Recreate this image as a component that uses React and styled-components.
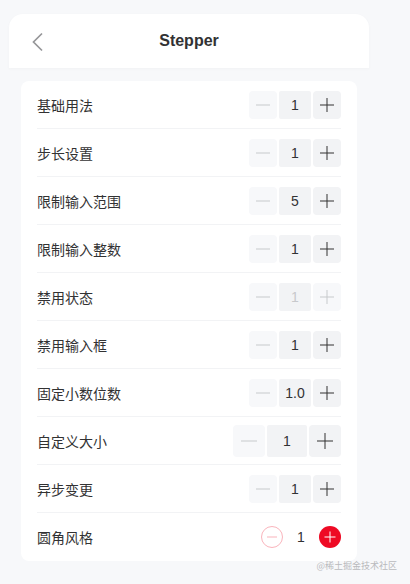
import React from "react";
import styled, { createGlobalStyle, css } from "styled-components";

const GlobalStyle = createGlobalStyle`
  html, body {
    margin: 0;
    padding: 0;
    background: #f7f8fa;
    font-family: "Liberation Sans", "Noto Sans CJK SC", sans-serif;
    color: #323233;
  }
`;

const Page = styled.div`
  position: relative;
  width: 410px;
  height: 584px;
  overflow: hidden;
  padding: 14px 0 0 9px;
  box-sizing: border-box;
`;

const Phone = styled.div`
  width: 360px;
  display: flex;
  flex-direction: column;
  gap: 13px;
`;

const NavBar = styled.div`
  height: 54px;
  background: #fff;
  border-radius: 14px 14px 0 0;
  display: flex;
  align-items: center;
  justify-content: center;
  position: relative;
  box-shadow: 0 1px 3px rgba(100, 101, 102, 0.04);
`;

const BackIcon = styled.svg`
  position: absolute;
  left: 22px;
  top: 18px;
`;

const Title = styled.div`
  font-size: 16px;
  font-weight: bold;
  color: #323233;
`;

const Card = styled.div`
  margin: 0 12px;
  background: #fff;
  border-radius: 8px;
  overflow: hidden;
`;

const Row = styled.div`
  height: 48px;
  display: flex;
  align-items: center;
  justify-content: space-between;
  padding: 0 16px;
  position: relative;
  &:not(:last-child)::after {
    content: "";
    position: absolute;
    left: 16px;
    right: 16px;
    bottom: 0;
    height: 1px;
    background: #f2f3f5;
  }
`;

const Label = styled.span`
  font-size: 14px;
  color: #323233;
  font-family: "Noto Sans CJK SC", sans-serif;
`;

const Stepper = styled.div`
  display: flex;
  align-items: center;
  gap: 2px;
`;

const StepButton = styled.button`
  position: relative;
  width: ${(p) => p.$size}px;
  height: ${(p) => p.$size}px;
  border: 0;
  padding: 0;
  border-radius: 4px;
  background: ${(p) => (p.$disabled ? "#f7f8fa" : "#f2f3f5")};
  &::before,
  &::after {
    content: "";
    position: absolute;
    top: 50%;
    left: 50%;
    transform: translate(-50%, -50%);
    background: ${(p) => (p.$disabled ? "#c8c9cc" : "#323233")};
  }
  &::before {
    width: 50%;
    height: 1px;
  }
  &::after {
    width: ${(p) => (p.$plus ? "1px" : "0")};
    height: 50%;
  }
  ${(p) =>
    p.$round &&
    css`
      border-radius: 50%;
      background: ${p.$plus ? "#ee0a24" : "#fff"};
      border: ${p.$plus ? "0" : "1px solid #ee0a24"};
      box-sizing: border-box;
      opacity: ${p.$disabled ? 0.3 : 1};
      &::before,
      &::after {
        background: ${p.$plus ? "#fff" : "#ee0a24"};
      }
    `}
`;

const ValueBox = styled.div`
  width: ${(p) => p.$width}px;
  height: ${(p) => p.$height}px;
  display: flex;
  align-items: center;
  justify-content: center;
  font-size: 14px;
  border-radius: 2px;
  background: ${(p) => (p.$round ? "transparent" : "#f2f3f5")};
  color: ${(p) => (p.$disabled ? "#c8c9cc" : "#323233")};
`;

const Watermark = styled.div`
  position: absolute;
  right: 13px;
  bottom: 12px;
  font-size: 9px;
  color: #b9babd;
  font-family: "Noto Sans CJK SC", sans-serif;
`;

const rows = [
  { label: "基础用法", value: "1" },
  { label: "步长设置", value: "1" },
  { label: "限制输入范围", value: "5" },
  { label: "限制输入整数", value: "1" },
  { label: "禁用状态", value: "1", disabled: true },
  { label: "禁用输入框", value: "1" },
  { label: "固定小数位数", value: "1.0" },
  { label: "自定义大小", value: "1", big: true },
  { label: "异步变更", value: "1" },
  { label: "圆角风格", value: "1", round: true },
];

const StepperControl = ({ value, disabled, big, round }) => {
  const size = round ? 22 : big ? 32 : 28;
  return (
    <Stepper>
      <StepButton $size={size} $disabled $round={round} />
      <ValueBox
        $width={big ? 40 : 32}
        $height={size}
        $round={round}
        $disabled={disabled}
      >
        {value}
      </ValueBox>
      <StepButton $size={size} $plus $disabled={disabled} $round={round} />
    </Stepper>
  );
};

export default function App() {
  return (
    <Page>
      <GlobalStyle />
      <Phone>
        <NavBar>
          <BackIcon width="13" height="20" viewBox="0 0 13 20">
            <path
              d="M11 1.5 L2.5 10 L11 18.5"
              fill="none"
              stroke="#969799"
              strokeWidth="1.7"
            />
          </BackIcon>
          <Title>Stepper</Title>
        </NavBar>
        <Card>
          {rows.map((r) => (
            <Row key={r.label}>
              <Label>{r.label}</Label>
              <StepperControl {...r} />
            </Row>
          ))}
        </Card>
      </Phone>
      <Watermark>@稀土掘金技术社区</Watermark>
    </Page>
  );
}
